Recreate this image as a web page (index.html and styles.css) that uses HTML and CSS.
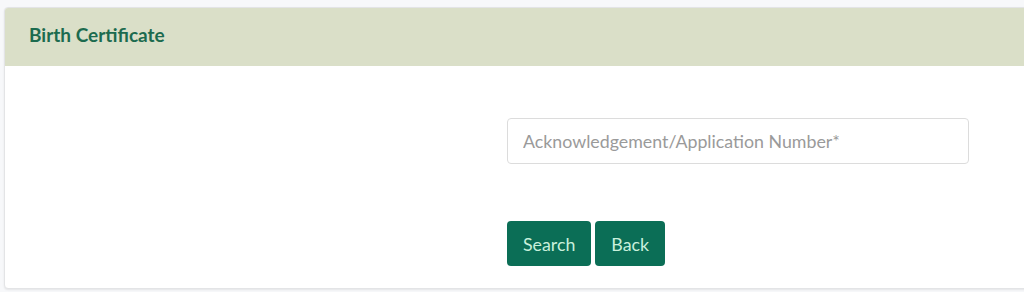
FILE: index.html
```html
<!DOCTYPE html>
<html>
<head>
<meta charset="utf-8">
<link rel="stylesheet" href="styles.css">
</head>
<body>
<div class="card">
  <div class="card-header">Birth Certificate</div>
  <div class="card-body">
    <div class="spacer"></div>
    <div class="form">
      <input class="field" type="text" placeholder="Acknowledgement/Application Number*">
      <div class="actions">
        <button class="btn">Search</button>
        <button class="btn">Back</button>
      </div>
    </div>
  </div>
</div>
</body>
</html>
```
FILE: styles.css
```css
html, body {
  margin: 0;
  padding: 0;
  background: #f7f8fa;
  font-family: Lato, "Open Sans", sans-serif;
}
body {
  padding: 7px 0 0 4px;
  height: 292px;
  box-sizing: border-box;
  overflow: hidden;
}
.card {
  width: 1030px;
  height: 282px;
  background: #ffffff;
  border: 1px solid #e3e4e6;
  border-radius: 4px;
  box-sizing: border-box;
  box-shadow: 0 1px 2px rgba(0,0,0,0.08);
  overflow: hidden;
}
.card-header {
  height: 58px;
  background: #dadfc8;
  color: #1c6b4f;
  font-weight: 700;
  font-size: 19px;
  padding: 0 0 5px 24px;
  display: flex;
  align-items: center;
  box-sizing: border-box;
}
.card-body {
  display: flex;
  padding-top: 52px;
}
.spacer {
  width: 502px;
  flex: none;
}
.form {
  display: flex;
  flex-direction: column;
}
.field {
  width: 462px;
  height: 46px;
  box-sizing: border-box;
  border: 1px solid #dcdcdc;
  border-radius: 4px;
  padding: 0 15px;
  font-family: Lato, "Open Sans", sans-serif;
  font-size: 17.8px;
  color: #333;
  background: #fff;
  outline: none;
}
.field::placeholder {
  color: #9a9a9a;
}
.actions {
  display: flex;
  gap: 4px;
  margin-top: 57px;
}
.btn {
  height: 45px;
  background: #0b6e56;
  color: #c9f0dc;
  border: none;
  border-radius: 4px;
  font-family: Lato, "Open Sans", sans-serif;
  font-size: 17.8px;
  padding: 0 16px;
}
```
